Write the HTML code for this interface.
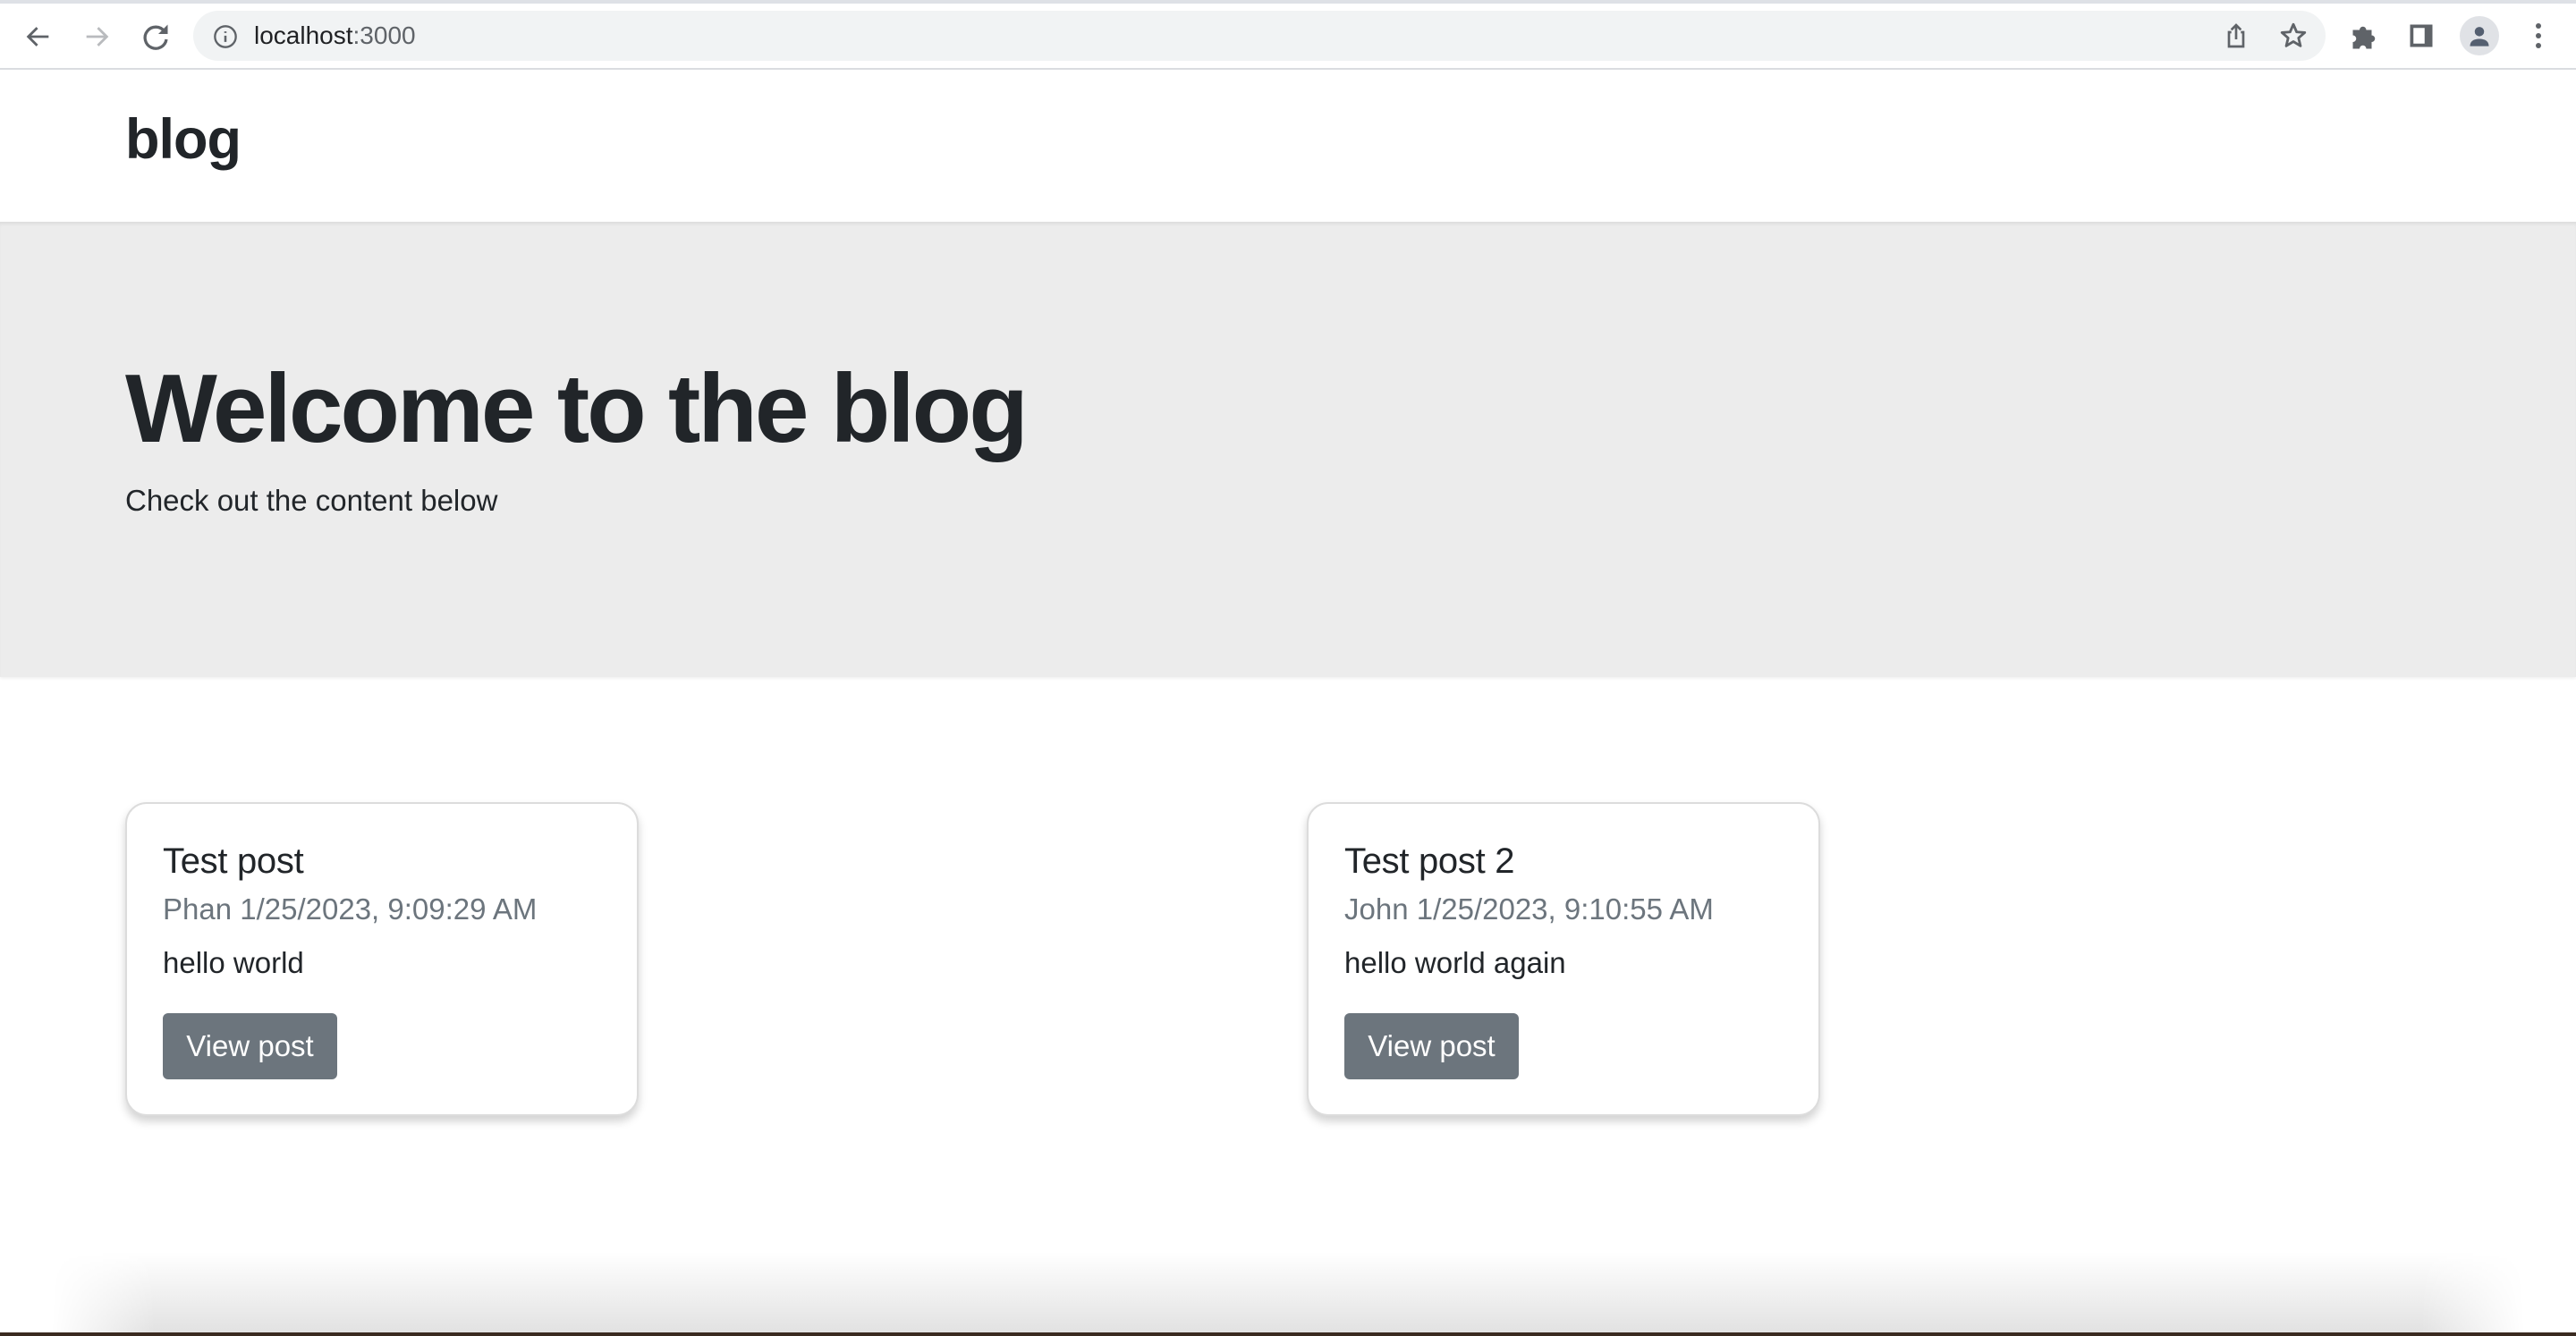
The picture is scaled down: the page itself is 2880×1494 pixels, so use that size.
<!DOCTYPE html>
<html><head><meta charset="utf-8"><style>
*{margin:0;padding:0;box-sizing:border-box}
body{width:2880px;height:1494px;position:relative;overflow:hidden;background:#fff;font-family:"Liberation Sans",sans-serif;color:#212529}
.a{position:absolute}
.card{position:absolute;width:574px;height:351px;border:2px solid #dcdcdc;border-radius:24px;background:#fff;box-shadow:0 6px 10px rgba(0,0,0,.18)}
.card .t{position:absolute;left:40px;top:40px;font-size:40px;line-height:48px;color:#212529;letter-spacing:-0.3px}
.card .s{position:absolute;left:40px;top:98px;font-size:33px;line-height:40px;color:#6c757d}
.card .b{position:absolute;left:40px;top:158px;font-size:33px;line-height:40px;color:#212529}
.card .btn{position:absolute;left:40px;top:234px;width:195px;height:74px;background:#6c757d;border-radius:6px;color:#fff;font-size:33px;line-height:74px;text-align:center}
</style></head><body>
<div class="a" style="left:0;top:0;width:2880px;height:4px;background:#dee1e6"></div>
<div class="a" style="left:0;top:76px;width:2880px;height:2px;background:#dadce0"></div>
<svg class="a" style="left:26px;top:24px" width="34" height="34" viewBox="0 0 24 24"><path d="M20 12H5M11 5l-7 7 7 7" stroke="#5f6368" stroke-width="2" fill="none"/></svg>
<svg class="a" style="left:91px;top:24px" width="34" height="34" viewBox="0 0 24 24"><path d="M4 12h15M13 5l7 7-7 7" stroke="#b9bbbe" stroke-width="2" fill="none"/></svg>
<svg class="a" style="left:156px;top:23px" width="36" height="36" viewBox="0 0 24 24"><path d="M18.5 8A8 8 0 1 0 20 14" stroke="#5f6368" stroke-width="2.2" fill="none"/><path d="M21 3v7h-7z" fill="#5f6368"/></svg>
<div class="a" style="left:216px;top:12px;width:2384px;height:56px;border-radius:28px;background:#f1f3f4"></div>
<svg class="a" style="left:238px;top:27px" width="28" height="28" viewBox="0 0 24 24"><circle cx="12" cy="12" r="10" stroke="#5f6368" stroke-width="2" fill="none"/><path d="M12 11v6M12 7v1.5" stroke="#5f6368" stroke-width="2.2"/></svg>
<div class="a" style="left:284px;top:22px;font-size:28px;line-height:36px;color:#202124">localhost<span style="color:#5f6368">:3000</span></div>
<svg class="a" style="left:2484px;top:24px" width="32" height="32" viewBox="0 0 24 24"><path d="M8 9H6v12h12V9h-2M12 15V3M8 7l4-4 4 4" stroke="#5f6368" stroke-width="2" fill="none"/></svg>
<svg class="a" style="left:2547px;top:23px" width="34" height="34" viewBox="0 0 24 24"><path d="M12 3l2.6 6 6.4.5-4.9 4.2 1.5 6.3L12 16.6 6.4 20l1.5-6.3L3 9.5 9.4 9z" stroke="#5f6368" stroke-width="2" fill="none" stroke-linejoin="round"/></svg>
<svg class="a" style="left:2626px;top:23px" width="36" height="36" viewBox="0 0 24 24"><path d="M3 7h5a2.5 2.5 0 0 1 5 0h4v4a2.5 2.5 0 0 1 0 5v5h-4a2.5 2.5 0 0 0-5 0H3v-5a2.5 2.5 0 0 0 0-5z" fill="#5f6368"/></svg>
<svg class="a" style="left:2692px;top:25px" width="30" height="30" viewBox="0 0 24 24"><path d="M2 2h20v20H2z" fill="#5f6368"/><path d="M5 5h10v14H5z" fill="#fff"/></svg>
<div class="a" style="left:2750px;top:18px;width:44px;height:44px;border-radius:50%;background:#e0e2e6"></div>
<svg class="a" style="left:2758px;top:26px" width="28" height="28" viewBox="0 0 24 24"><circle cx="12" cy="8" r="4.5" fill="#545f70"/><path d="M3 22c0-5 4-7 9-7s9 2 9 7z" fill="#545f70"/></svg>
<svg class="a" style="left:2826px;top:24px" width="24" height="32" viewBox="0 0 24 32"><circle cx="12" cy="5" r="3" fill="#5f6368"/><circle cx="12" cy="16" r="3" fill="#5f6368"/><circle cx="12" cy="27" r="3" fill="#5f6368"/></svg>
<div class="a" style="left:140px;top:121px;font-size:63px;line-height:70px;font-weight:bold;letter-spacing:-1px;color:#212529">blog</div>
<div class="a" style="left:0;top:248px;width:2880px;height:509px;background:#ececec;box-shadow:inset 0 4px 4px -2px rgba(0,0,0,.08), 0 2px 3px rgba(0,0,0,.06)"></div>
<div class="a" style="left:140px;top:393px;font-size:109px;line-height:128px;font-weight:bold;letter-spacing:-3px;color:#212529">Welcome to the blog</div>
<div class="a" style="left:140px;top:540px;font-size:33px;line-height:40px;color:#212529">Check out the content below</div>
<div class="card" style="left:140px;top:897px"><div class="t">Test post</div><div class="s">Phan 1/25/2023, 9:09:29 AM</div><div class="b">hello world</div><div class="btn">View post</div></div>
<div class="card" style="left:1461px;top:897px"><div class="t">Test post 2</div><div class="s">John 1/25/2023, 9:10:55 AM</div><div class="b">hello world again</div><div class="btn">View post</div></div>
<div class="a" style="left:0;top:1400px;width:2880px;height:90px;background:linear-gradient(#fff,#e2e2e2);-webkit-mask:linear-gradient(90deg,transparent 2%,#000 6%,#000 94%,transparent 98%)"></div>
<div class="a" style="left:0;top:1490px;width:2880px;height:4px;background:#3a2a20"></div>
</body></html>
